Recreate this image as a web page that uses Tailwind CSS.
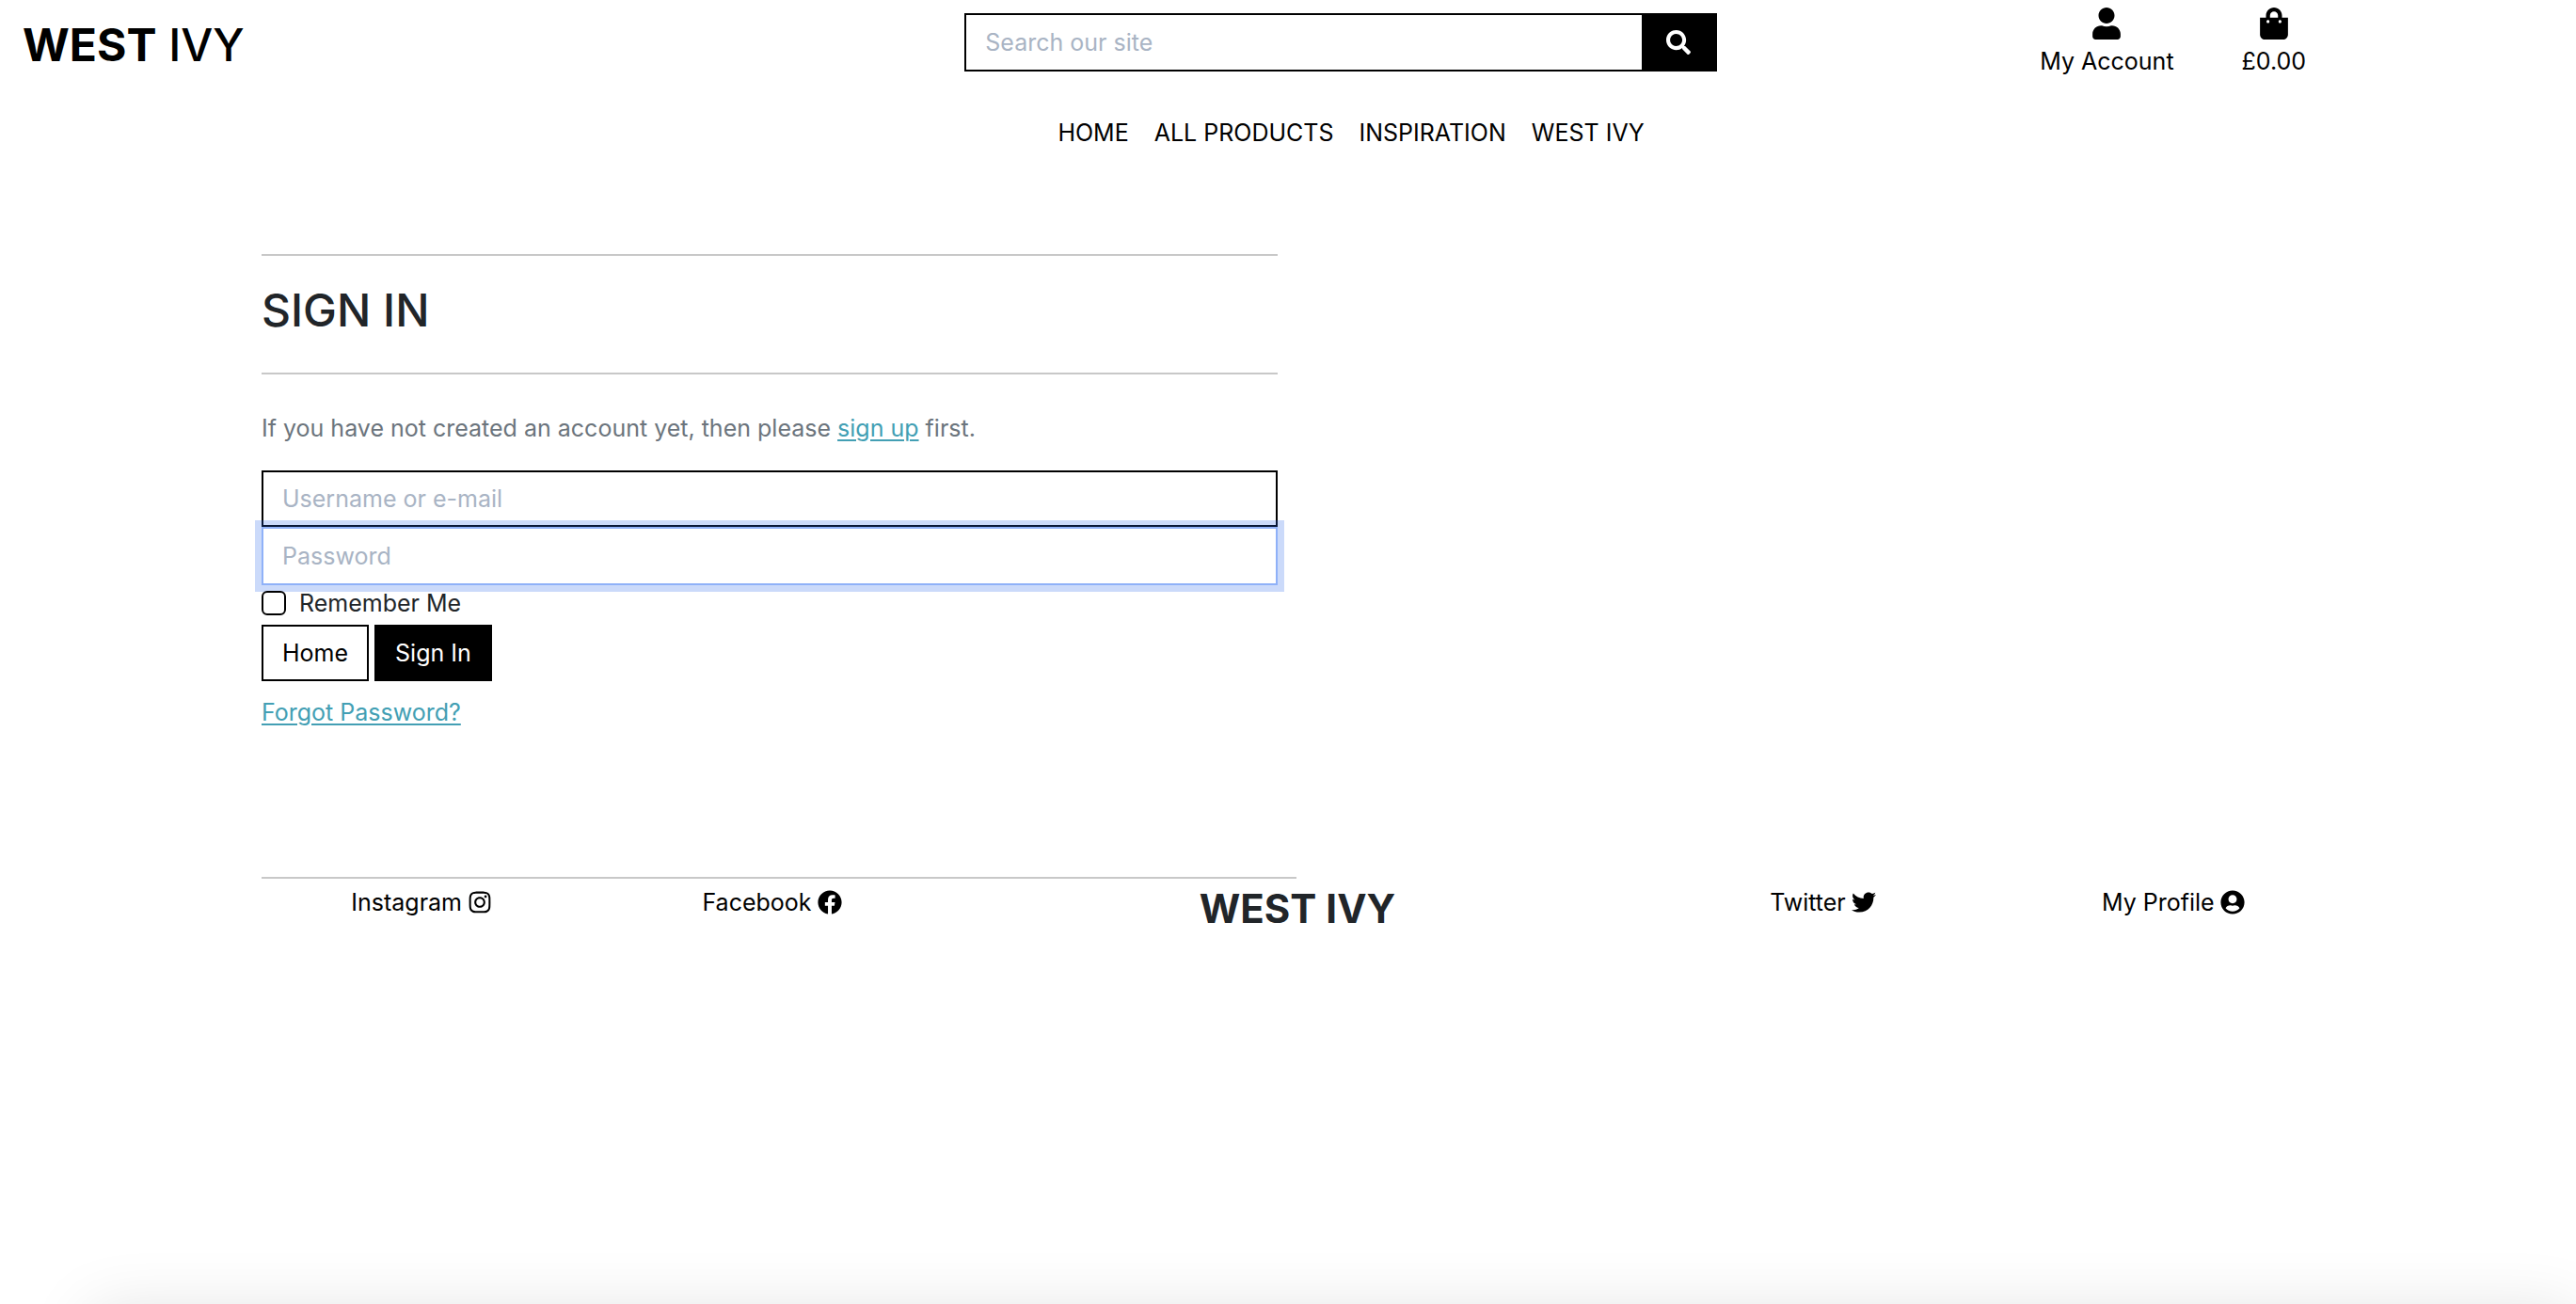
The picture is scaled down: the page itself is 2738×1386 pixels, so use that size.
<!DOCTYPE html>
<html lang="en">
<head>
<meta charset="utf-8">
<meta name="viewport" content="width=device-width, initial-scale=1">
<title>West Ivy - Sign In</title>
<script src="https://cdn.jsdelivr.net/npm/@tailwindcss/browser@4"></script>
</head>
<body class="relative min-h-screen overflow-x-hidden bg-white font-['Inter','Liberation_Sans',sans-serif] text-[25px] leading-[38px] text-[#212529]">

<header class="text-black">
  <div class="grid grid-cols-3 items-start">
    <a href="#" class="pt-5 pl-6 text-[48px] leading-[56px] font-medium"><span class="font-bold">WEST</span> IVY</a>
    <form class="mt-3.5 flex h-[62px] w-[800px] max-w-full justify-self-end border-2 border-black" onsubmit="return false">
      <input type="search" aria-label="Search our site" placeholder="Search our site" class="min-w-0 flex-1 px-5 outline-none placeholder:text-[#a9b4c4]">
      <button type="submit" aria-label="Search" class="flex w-[78px] items-center justify-center bg-black text-white">
        <svg class="size-[26px]" viewBox="0 0 512 512" fill="currentColor"><path d="M505 442.7L405.3 343c-4.5-4.5-10.6-7-17-7H372c27.6-35.3 44-79.7 44-128C416 93.1 322.9 0 208 0S0 93.1 0 208s93.1 208 208 208c48.3 0 92.7-16.4 128-44v16.3c0 6.4 2.5 12.5 7 17l99.7 99.7c9.4 9.4 24.6 9.4 33.9 0l28.3-28.3c9.4-9.4 9.4-24.6.1-34zM208 336c-70.7 0-128-57.2-128-128 0-70.7 57.2-128 128-128 70.7 0 128 57.2 128 128 0 70.7-57.2 128-128 128z"/></svg>
      </button>
    </form>
    <div class="flex justify-center gap-[72px] pt-2 pl-14">
      <a href="#" class="flex flex-col items-center gap-1">
        <svg class="h-[34px] w-[30px]" viewBox="0 0 448 512" fill="currentColor"><path d="M224 256c70.7 0 128-57.3 128-128S294.7 0 224 0 96 57.3 96 128s57.3 128 128 128zm89.6 32h-16.7c-22.2 10.2-46.9 16-72.9 16s-50.6-5.800-72.900-16h-16.700C60.200 288 0 348.200 0 422.400V464c0 26.500 21.500 48 48 48h352c26.500 0 48-21.500 48-48v-41.600c0-74.200-60.200-134.400-134.400-134.400z"/></svg>
        <span>My Account</span>
      </a>
      <a href="#" class="flex flex-col items-center gap-1">
        <svg class="h-[34px] w-[30px]" viewBox="0 0 448 512" fill="currentColor"><path d="M352 160v-32C352 57.42 294.579 0 224 0 153.42 0 96 57.42 96 128v32H0v272c0 44.183 35.817 80 80 80h288c44.183 0 80-35.817 80-80V160h-96zm-192-32c0-35.29 28.71-64 64-64s64 28.71 64 64v32H160v-32zm160 120c-13.255 0-24-10.745-24-24s10.745-24 24-24 24 10.745 24 24-10.745 24-24 24zm-192 0c-13.255 0-24-10.745-24-24s10.745-24 24-24 24 10.745 24 24-10.745 24-24 24z"/></svg>
        <span>£0.00</span>
      </a>
    </div>
  </div>
  <nav class="mt-[38px] flex justify-center gap-[27px] pl-[134px]">
    <a href="#">HOME</a>
    <a href="#">ALL PRODUCTS</a>
    <a href="#">INSPIRATION</a>
    <a href="#">WEST IVY</a>
  </nav>
</header>

<div class="mx-auto max-w-[2182px]">
  <main class="mt-[110px] w-1/2 pr-[11px]">
    <hr class="border-t-2 border-[#c8c8c8]">
    <h1 class="mt-7 text-[48px] leading-[60px] font-medium">SIGN IN</h1>
    <hr class="mt-9 border-t-2 border-[#c8c8c8]">
    <p class="mt-[38px] text-[#6c757d]">If you have not created an account yet, then please <a href="#" class="text-[#439fb4] underline decoration-2 underline-offset-3">sign up</a> first.</p>

    <form class="mt-[26px]" onsubmit="return false">
      <input type="text" aria-label="Username or e-mail" placeholder="Username or e-mail" class="block h-[60px] w-full border-2 border-black px-5 text-black outline-none placeholder:text-[#a9b4c4]">
      <input type="password" aria-label="Password" placeholder="Password" class="relative block h-[62px] w-full border-2 border-[#8fb1f8] px-5 text-black shadow-[0_0_0_7px_rgba(37,99,235,0.24)] outline-none placeholder:text-[#a9b4c4]">
      <div class="relative flex items-center gap-3.5">
        <input type="checkbox" id="remember" class="size-[26px] appearance-none rounded-md border-2 border-black bg-white checked:bg-black">
        <label for="remember">Remember Me</label>
      </div>
      <div class="mt-1 flex gap-1.5">
        <button type="button" class="h-[60px] border-2 border-black px-5 text-black">Home</button>
        <button type="submit" class="h-[60px] border-2 border-black bg-black px-5 text-white">Sign In</button>
      </div>
      <p class="mt-3.5"><a href="#" class="text-[#439fb4] underline decoration-2 underline-offset-3">Forgot Password?</a></p>
    </form>
  </main>

  <footer class="mt-[156px] text-black">
    <hr class="max-w-[1100px] border-t-2 border-[#c8c8c8]">
    <div class="mt-1.5 -mr-9 -ml-4 grid grid-cols-6">
      <a href="#" class="flex items-center justify-center gap-1.5 self-start">Instagram
        <svg class="size-[26px] shrink-0" viewBox="0 0 512 512" fill="currentColor"><path transform="translate(32)" d="M224.100 141c-63.600 0-114.900 51.300-114.900 114.900s51.300 114.900 114.900 114.900S339 319.500 339 255.900 287.700 141 224.100 141zm0 189.600c-41.100 0-74.700-33.500-74.700-74.700s33.500-74.700 74.700-74.700 74.700 33.500 74.700 74.700-33.600 74.700-74.700 74.700zm146.400-194.300c0 14.900-12 26.800-26.800 26.800-14.900 0-26.800-12-26.800-26.800s12-26.800 26.800-26.800 26.800 12 26.800 26.800zm76.100 27.200c-1.700-35.900-9.900-67.700-36.200-93.900-26.200-26.200-58-34.400-93.900-36.200-37-2.100-147.900-2.100-184.900 0-35.800 1.700-67.600 9.900-93.900 36.100s-34.400 58-36.200 93.900c-2.100 37-2.100 147.900 0 184.900 1.700 35.900 9.900 67.700 36.200 93.900s58 34.400 93.900 36.200c37 2.100 147.900 2.100 184.900 0 35.900-1.700 67.700-9.900 93.900-36.200 26.200-26.200 34.400-58 36.200-93.900 2.100-37 2.100-147.800 0-184.800zM398.800 388c-7.800 19.600-22.900 34.700-42.600 42.600-29.500 11.700-99.500 9-132.100 9s-102.700 2.600-132.100-9c-19.600-7.800-34.700-22.900-42.600-42.600-11.700-29.500-9-99.500-9-132.100s-2.600-102.700 9-132.100c7.800-19.600 22.900-34.700 42.600-42.600 29.500-11.700 99.500-9 132.100-9s102.700-2.600 132.100 9c19.600 7.800 34.700 22.900 42.600 42.600 11.700 29.500 9 99.500 9 132.100s2.700 102.700-9 132.100z"/></svg>
      </a>
      <a href="#" class="flex items-center justify-center gap-1.5 self-start">Facebook
        <svg class="size-[26px] shrink-0" viewBox="0 0 512 512" fill="currentColor"><path d="M504 256C504 119 393 8 256 8S8 119 8 256c0 123.780 90.690 226.380 209.250 245V327.690h-63V256h63v-54.640c0-62.150 37-96.480 93.670-96.480 27.140 0 55.520 4.840 55.520 4.840v61h-31.280c-30.800 0-40.410 19.120-40.410 38.730V256h68.780l-11 71.690h-57.780V501C413.310 482.380 504 379.780 504 256z"/></svg>
      </a>
      <h2 class="col-span-2 text-center text-[42px] leading-[52px] font-bold text-[#212529]">WEST IVY</h2>
      <a href="#" class="flex items-center justify-center gap-1.5 self-start">Twitter
        <svg class="size-[26px] shrink-0" viewBox="0 0 512 512" fill="currentColor"><path d="M459.370 151.716c.325 4.548.325 9.097.325 13.645 0 138.720-105.583 298.558-298.558 298.558-59.452 0-114.680-17.219-161.137-47.106 8.447.974 16.568 1.299 25.340 1.299 49.055 0 94.213-16.568 130.274-44.832-46.132-.975-84.792-31.188-98.112-72.772 6.498.974 12.995 1.624 19.818 1.624 9.421 0 18.843-1.300 27.614-3.573-48.081-9.747-84.143-51.980-84.143-102.985v-1.299c13.969 7.797 30.214 12.670 47.431 13.319-28.264-18.843-46.781-51.005-46.781-87.391 0-19.492 5.197-37.360 14.294-52.954 51.655 63.675 129.300 105.258 216.365 109.807-1.624-7.797-2.599-15.918-2.599-24.040 0-57.828 46.782-104.934 104.934-104.934 30.213 0 57.502 12.670 76.670 33.137 23.715-4.548 46.456-13.320 66.599-25.340-7.798 24.366-24.366 44.833-46.132 57.827 21.117-2.273 41.584-8.122 60.426-16.243-14.292 20.791-32.161 39.308-52.628 54.253z"/></svg>
      </a>
      <a href="#" class="flex items-center justify-center gap-1.5 self-start">My Profile
        <svg class="size-[26px] shrink-0" viewBox="-8 0 512 512" fill="currentColor"><path d="M248 8C111 8 0 119 0 256s111 248 248 248 248-111 248-248S385 8 248 8zm0 96c48.600 0 88 39.400 88 88s-39.400 88-88 88-88-39.400-88-88 39.400-88 88-88zm0 344c-58.700 0-111.300-26.600-146.500-68.200 18.800-35.400 55.600-59.800 98.500-59.800 2.400 0 4.800.4 7.100 1.100 13 4.200 26.600 6.900 40.900 6.900 14.300 0 28-2.700 40.900-6.900 2.300-.7 4.700-1.100 7.100-1.100 42.900 0 79.700 24.400 98.500 59.800C359.300 421.400 306.700 448 248 448z"/></svg>
      </a>
    </div>
  </footer>
</div>

<!-- Soft shadow rising from the bottom edge of the window -->
<div class="pointer-events-none fixed inset-x-0 bottom-0 h-24 overflow-hidden">
  <div class="absolute top-full right-0 left-24 mt-2 h-40 shadow-[0_0_70px_rgba(0,0,0,0.12)]"></div>
</div>
</body>
</html>
